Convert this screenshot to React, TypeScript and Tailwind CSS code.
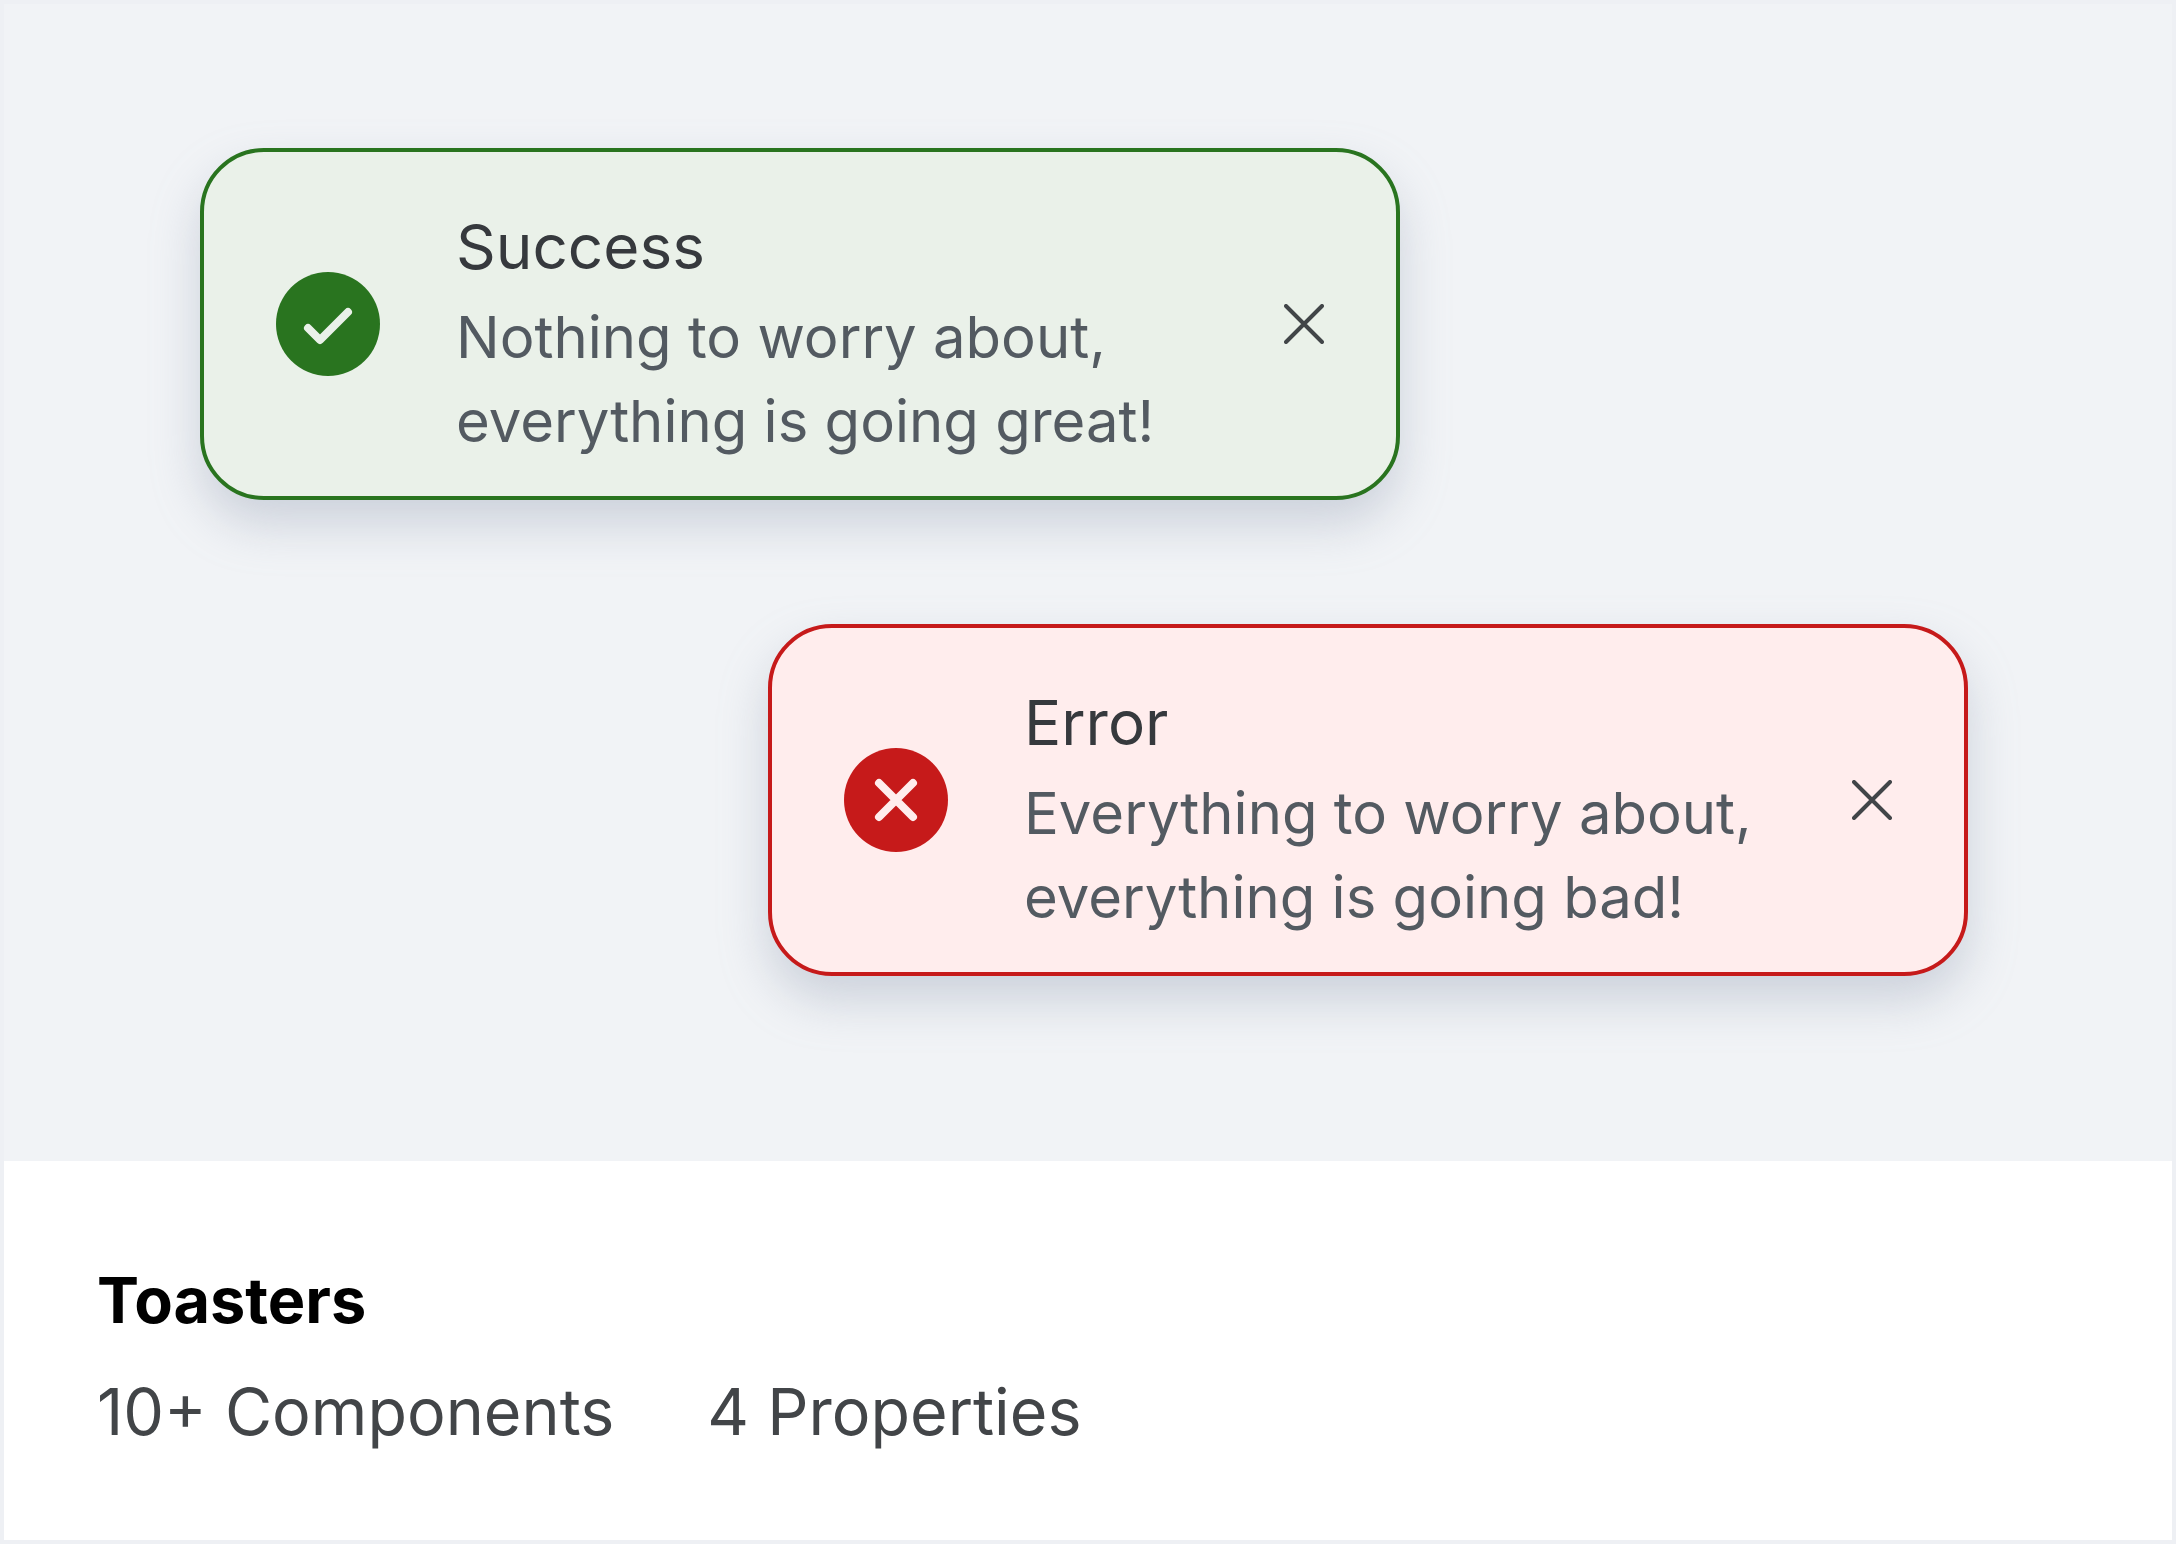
import React from 'react';

const Toast: React.FC<{
    title: string;
    lines: string[];
    tone: 'success' | 'error';
    className: string;
}> = ({ title, lines, tone, className }) => {
    const isSuccess = tone === 'success';
    return (
        <div
            className={`${className} w-[1200px] h-[352px] flex items-center rounded-[64px] border-4 pl-[72px] pr-[72px] shadow-[0_24px_48px_rgba(150,160,180,0.4)] ${
                isSuccess ? 'bg-[#eaf1e9] border-[#29741f]' : 'bg-[#ffeded] border-[#c61a1a]'
            }`}
        >
            <div className={`w-[104px] h-[104px] shrink-0 rounded-full ${isSuccess ? 'bg-[#29741f]' : 'bg-[#c61a1a]'}`}>
                <svg width="104" height="104" viewBox="0 0 104 104" fill="none" strokeWidth="8" strokeLinecap="round" strokeLinejoin="round">
                    {isSuccess ? (
                        <path d="M32 56L44 68L72 40" stroke="#eaf1e9" />
                    ) : (
                        <path d="M35 35L69 69M69 35L35 69" stroke="#ffeded" />
                    )}
                </svg>
            </div>
            <div className="ml-[76px] flex-1 pt-[20px]">
                <div className="text-[62px] leading-[84px] mb-[6px] text-[#36393d]">{title}</div>
                {lines.map((line) => (
                    <div key={line} className="text-[58px] leading-[84px] text-[#535a61]">
                        {line}
                    </div>
                ))}
            </div>
            <svg width="40" height="40" viewBox="0 0 40 40" fill="none" stroke="#414548" strokeWidth="4" strokeLinecap="round" className="shrink-0">
                <path d="M2 2L38 38M38 2L2 38" />
            </svg>
        </div>
    );
};

export default function App() {
    return (
        <div className="w-[2176px] h-[1544px] border-4 border-[#eef0f4] bg-white font-['Inter',sans-serif] flex flex-col">
            <div className="h-[1157px] bg-[#f1f3f6] pt-[144px] pl-[196px] flex flex-col gap-[124px]">
                <Toast
                    tone="success"
                    title="Success"
                    lines={['Nothing to worry about,', 'everything is going great!']}
                    className=""
                />
                <Toast
                    tone="error"
                    title="Error"
                    lines={['Everything to worry about,', 'everything is going bad!']}
                    className="ml-[568px]"
                />
            </div>
            <div className="flex-1 pl-[93px] pt-[97px]">
                <div className="text-[63px] leading-[84px] font-bold text-black">Toasters</div>
                <div className="mt-[28px] flex gap-[93px] text-[64.6px] leading-[84px] text-[#424548]">
                    <span>10+ Components</span>
                    <span>4 Properties</span>
                </div>
            </div>
        </div>
    );
}
